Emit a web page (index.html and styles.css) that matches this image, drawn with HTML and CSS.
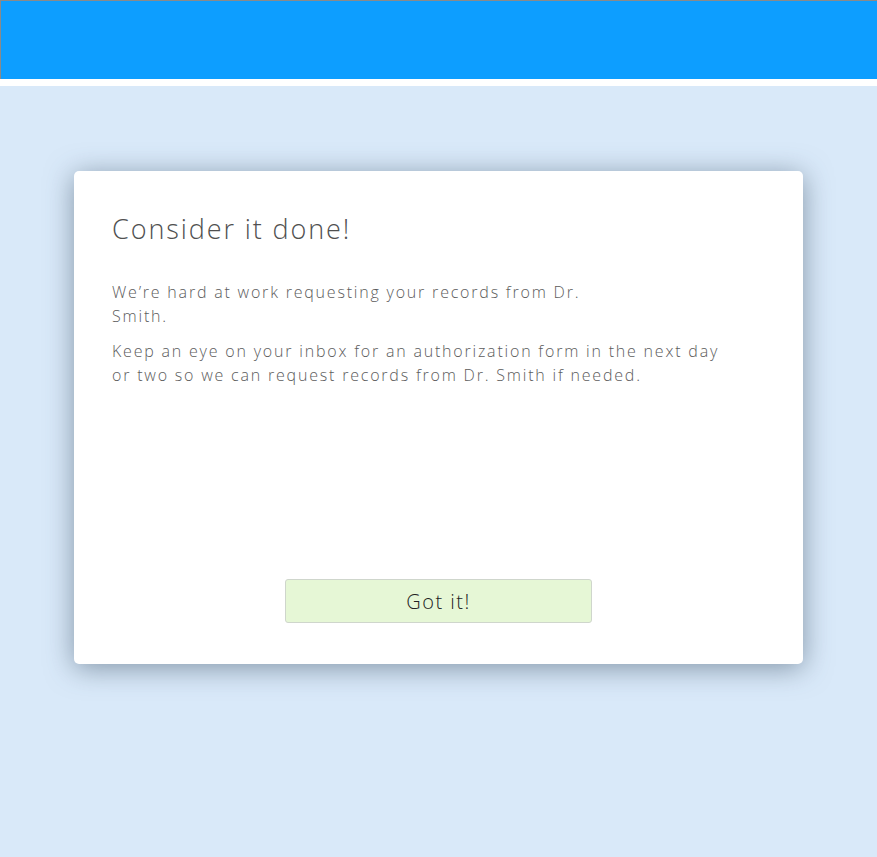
FILE: index.html
```html
<!DOCTYPE html>
<html lang="en">
<head>
<meta charset="utf-8">
<title>Consider it done</title>
<link rel="stylesheet" href="styles.css">
</head>
<body>
<header class="topbar"></header>
<main class="stage">
  <section class="card">
    <h1 class="card-title">Consider it done!</h1>
    <p class="card-text">We’re hard at work requesting your records from Dr.<br>Smith.</p>
    <p class="card-text">Keep an eye on your inbox for an authorization form in the next day<br>or two so we can request records from Dr. Smith if needed.</p>
    <div class="actions">
      <button class="btn-ok" type="button">Got it!</button>
    </div>
  </section>
</main>
</body>
</html>
```
FILE: styles.css
```css
html, body {
  margin: 0;
  padding: 0;
  background: #ffffff;
}
body {
  font-family: "Open Sans", "Liberation Sans", sans-serif;
  font-weight: 300;
  width: 877px;
  height: 857px;
  overflow: hidden;
}
.topbar {
  background: #0d9eff;
  border-top: 1px solid #8a8a8a;
  border-left: 1px solid #8a8a8a;
  box-sizing: border-box;
  height: 79px;
}
.stage {
  margin-top: 7px;
  background: #d9e9f9;
  height: 771px;
  padding-top: 85px;
  box-sizing: border-box;
}
.card {
  width: 729px;
  height: 493px;
  margin: 0 auto;
  background: #ffffff;
  border-radius: 5px;
  box-shadow: 0 4px 28px rgba(60, 80, 100, 0.55);
  box-sizing: border-box;
  padding: 40px 38px 41px;
  display: flex;
  flex-direction: column;
}
.card-title {
  margin: 0;
  font-size: 27px;
  line-height: 36px;
  font-weight: 300;
  letter-spacing: 1.9px;
  color: #505050;
}
.card-text {
  margin: 33px 0 0;
  font-size: 16px;
  line-height: 24px;
  letter-spacing: 1.8px;
  color: #5c5c5c;
}
.card-text + .card-text {
  margin-top: 11px;
}
.actions {
  margin-top: auto;
  display: flex;
  justify-content: center;
}
.btn-ok {
  width: 307px;
  height: 44px;
  background: #e6f7d6;
  border: 1px solid #cfd6cc;
  border-radius: 3px;
  font-family: "Open Sans", "Liberation Sans", sans-serif;
  font-weight: 300;
  font-size: 20px;
  letter-spacing: 1.5px;
  color: #222222;
  padding: 0;
}
```
